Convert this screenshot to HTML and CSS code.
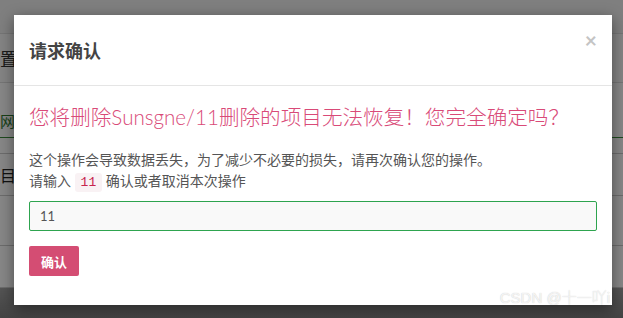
FILE: index.html
```html
<!DOCTYPE html>
<html lang="zh-CN">
<head>
    <meta charset="UTF-8">
    <meta name="viewport" content="width=device-width, initial-scale=1.0">
    <title>请求确认</title>
    <link rel="stylesheet" href="styles.css">
</head>
<body>
    <div class="page">
        <div class="topbar"></div>
        <div class="page-title"><span>置</span></div>
        <div class="tabs"><span class="tab active">网络</span></div>
        <div class="row short"></div>
        <div class="row"><span>目</span></div>
        <div class="row tall"></div>
        <div class="row"></div>
        <div class="footer"></div>
    </div>

    <div class="backdrop"></div>

    <div class="modal">
        <div class="modal-header">
            <h4>请求确认</h4>
            <span class="close">×</span>
        </div>
        <div class="modal-body">
            <h3 class="warning">您将删除Sunsgne/11删除的项目无法恢复！您完全确定吗？</h3>
            <p class="note">这个操作会导致数据丢失，为了减少不必要的损失，请再次确认您的操作。<br>请输入 <code>11</code> 确认或者取消本次操作</p>
            <input type="text" class="confirm-input" value="11">
            <button class="btn-confirm">确认</button>
        </div>
    </div>

    <div class="watermark">CSDN @十一吖i</div>
</body>
</html>
```

FILE: styles.css
```css
body {
    margin: 0;
    font-family: 'Lato', 'Noto Sans CJK SC', sans-serif;
    background: #f2f2f2;
    height: 318px;
    overflow: hidden;
}

/* page behind the dialog */
.page {
    display: flex;
    flex-direction: column;
    height: 318px;
}

.topbar {
    height: 33px;
    background: #f0f0f0;
}

.page-title {
    height: 48px;
    background: #fafafa;
    border-top: 1px solid #ddd;
    display: flex;
    align-items: center;
    font-size: 18px;
    color: #333;
}

.tabs {
    height: 54px;
    background: #fff;
    border-top: 1px solid #ddd;
    border-bottom: 1px solid #3c8a3c;
    display: flex;
    align-items: flex-end;
}

.tab {
    font-size: 15px;
    color: #2f7a2f;
    padding-bottom: 6px;
}

.row {
    height: 41px;
    background: #fff;
    border-bottom: 1px solid #ccc;
    display: flex;
    align-items: center;
    font-size: 16px;
    color: #222;
}

.row.short {
    height: 15px;
}

.row.tall {
    height: 49px;
}

.footer {
    flex: 1;
    background: linear-gradient(#a0a0a0, #808080);
}

.backdrop {
    position: absolute;
    inset: 0;
    background: rgba(0,0,0,0.47);
}

/* dialog */
.modal {
    position: absolute;
    left: 14px;
    top: 15px;
    width: 598px;
    height: 290px;
    background: #fff;
    box-shadow: 0 4px 14px rgba(0,0,0,0.45);
}

.modal-header {
    height: 70px;
    padding: 0 15px;
    border-bottom: 1px solid #e5e5e5;
    display: flex;
    align-items: center;
    justify-content: space-between;
}

.modal-header h4 {
    margin: 0;
    font-size: 18px;
    font-weight: bold;
    color: #444;
}

.close {
    font-size: 21px;
    font-weight: bold;
    color: #c4c4c4;
    align-self: flex-start;
    margin-top: 12px;
}

.modal-body {
    padding: 15px;
}

.warning {
    margin: 0;
    font-size: 20.6px;
    font-weight: 300;
    line-height: 32px;
    color: #d94a78;
}

.note {
    margin: 16px 0 0;
    font-size: 14px;
    line-height: 21px;
    color: #555;
}

.note code {
    font-family: 'Liberation Mono', monospace;
    font-size: 13px;
    color: #c7254e;
    background: #f9f2f4;
    padding: 2px 6px;
    border-radius: 3px;
}

.confirm-input {
    display: block;
    box-sizing: border-box;
    width: 100%;
    height: 30px;
    margin-top: 8px;
    padding: 0 10px;
    border: 1px solid #2ea44f;
    border-radius: 2px;
    background: #f9f9f9;
    font-family: 'Lato', 'Noto Sans CJK SC', sans-serif;
    font-size: 13px;
    color: #555;
    outline: none;
}

.btn-confirm {
    display: block;
    margin-top: 15px;
    width: 50px;
    height: 30px;
    border: none;
    border-radius: 2px;
    background: #d44d73;
    color: #fff;
    font-family: 'Lato', 'Noto Sans CJK SC', sans-serif;
    font-size: 13px;
    font-weight: bold;
    padding: 0;
}

.watermark {
    position: absolute;
    right: 13px;
    bottom: 11px;
    font-family: 'Liberation Sans', 'Noto Sans CJK SC', sans-serif;
    font-size: 15px;
    font-weight: 300;
    color: rgba(255,255,255,0.8);
    text-shadow: 0 0 1px rgba(0,0,0,0.25);
}
```
